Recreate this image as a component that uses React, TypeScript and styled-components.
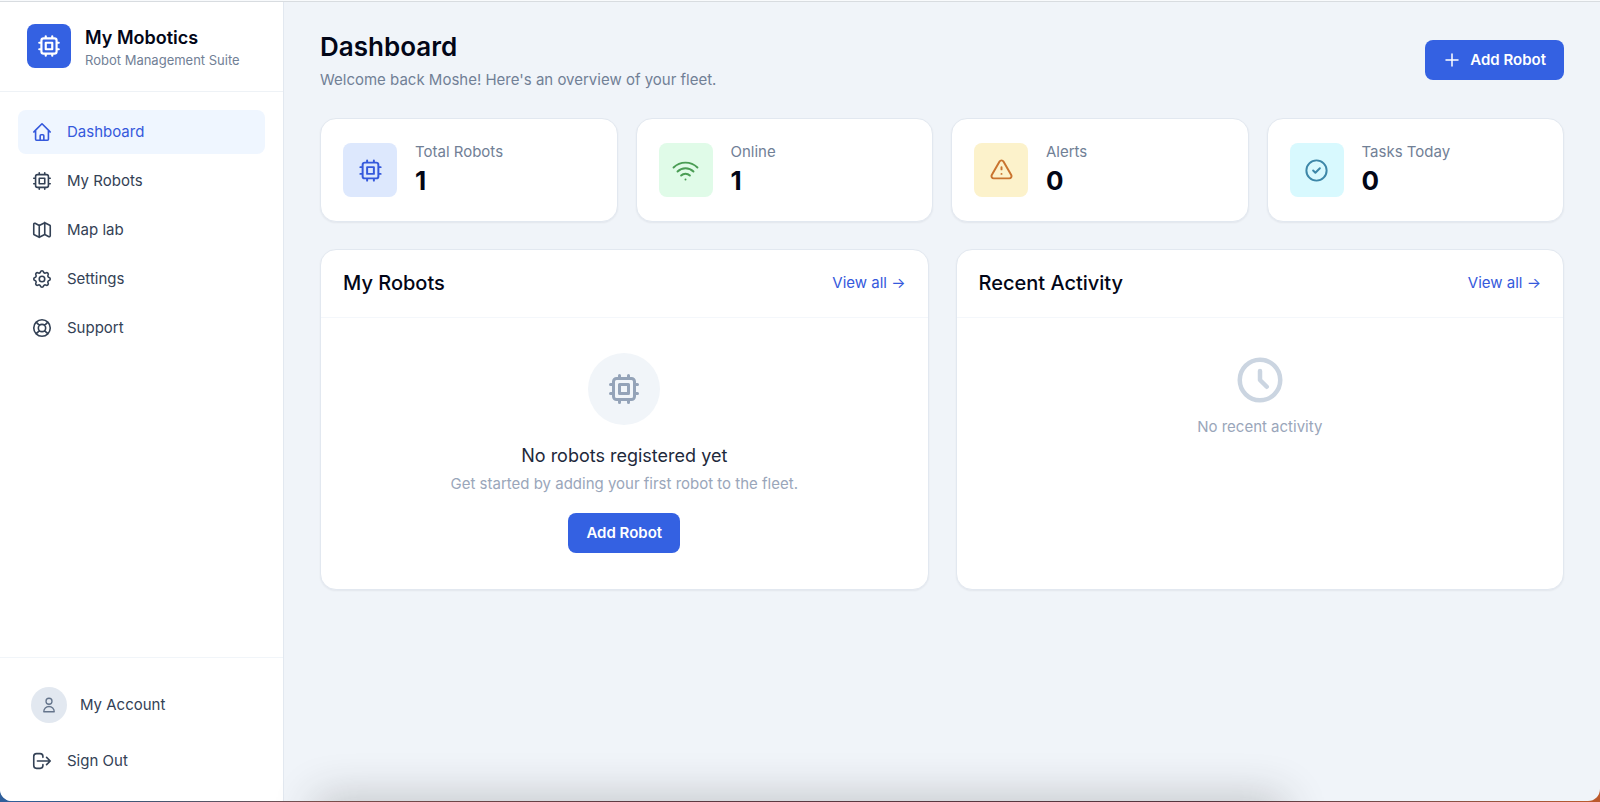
import React from "react";
import styled, { createGlobalStyle } from "styled-components";

const GlobalStyle = createGlobalStyle`
  * { box-sizing: border-box; }
  body {
    margin: 0;
    background: linear-gradient(to right, #2f5f9c 0, #3f5878 8%, #7a4f4c 20%, #5c3a42 40%, #54363f 75%, #7a4f4c 88%, #bd5a2c 100%);
    color: #020617;
    font-family: Inter, "Liberation Sans", sans-serif;
    font-size: 15px;
    line-height: 22px;
  }
  h1, h2, h3, p, ul, dl, dd { margin: 0; padding: 0; }
  a { color: inherit; text-decoration: none; }
`;

const Window = styled.div`
  position: relative;
  display: flex;
  flex-direction: column;
  min-height: calc(100vh - 1px);
  overflow: hidden;
  background: #f0f4f9;
  border-radius: 0 0 12px 12px;
`;

const TopEdge = styled.div`
  height: 2px;
  background: #f8fafc;
  border-bottom: 1px solid #d8dce0;
`;

const Shell = styled.div`
  display: flex;
  flex: 1;
`;

const Sidebar = styled.aside`
  display: flex;
  flex-direction: column;
  flex: none;
  width: 284px;
  background: #ffffff;
  border-right: 1px solid #e2e8f0;
`;

const Brand = styled.div`
  display: flex;
  align-items: center;
  gap: 14px;
  padding: 22px 27px 23px;
  border-bottom: 1px solid #eef2f6;
`;

const BrandMark = styled.div`
  display: grid;
  place-items: center;
  width: 44px;
  height: 44px;
  border-radius: 8px;
  background: #3461e2;
  color: #ffffff;
`;

const BrandName = styled.div`
  font-size: 18px;
  font-weight: 600;
  line-height: 28px;
`;

const BrandTagline = styled.div`
  color: #718096;
  font-size: 13px;
  line-height: 16px;
`;

const Nav = styled.nav`
  flex: 1;
  padding: 18px;
`;

const NavList = styled.ul`
  display: flex;
  flex-direction: column;
  gap: 5px;
  list-style: none;
`;

const NavLink = styled.a<{ $active?: boolean }>`
  display: flex;
  align-items: center;
  gap: 14px;
  height: 44px;
  padding: 0 13px;
  border-radius: 8px;
  background: ${(p) => (p.$active ? "#eff6ff" : "transparent")};
  color: ${(p) => (p.$active ? "#3559dc" : "#334155")};
`;

const SidebarFooter = styled.div`
  display: flex;
  flex-direction: column;
  gap: 5px;
  padding: 18px;
  border-top: 1px solid #f1f5f9;
`;

const AccountLink = styled.a`
  display: flex;
  align-items: center;
  gap: 13px;
  height: 58px;
  padding: 0 13px;
  color: #334155;
`;

const Avatar = styled.span`
  display: grid;
  place-items: center;
  width: 36px;
  height: 36px;
  border-radius: 50%;
  background: #e2e8f0;
  color: #64748b;
`;

const SignOutButton = styled.button`
  display: flex;
  align-items: center;
  gap: 14px;
  height: 44px;
  padding: 0 13px;
  border: 0;
  background: none;
  color: #334155;
  font: inherit;
  cursor: pointer;
`;

const Main = styled.main`
  display: flex;
  flex-direction: column;
  gap: 27px;
  flex: 1;
  min-width: 0;
  padding: 27px 36px;
`;

const PageHeader = styled.header`
  display: flex;
  align-items: center;
  justify-content: space-between;
`;

const PageTitle = styled.h1`
  font-size: 26px;
  font-weight: 600;
  line-height: 36px;
`;

const PageSubtitle = styled.p`
  margin-top: 4px;
  color: #718096;
`;

const PrimaryButton = styled.button`
  display: inline-flex;
  align-items: center;
  gap: 9px;
  height: 40px;
  padding: 0 18px;
  border: 0;
  border-radius: 8px;
  background: #3461e2;
  color: #ffffff;
  font: inherit;
  font-weight: 600;
  cursor: pointer;
`;

const StatGrid = styled.dl`
  display: grid;
  grid-template-columns: repeat(4, 1fr);
  gap: 18px;
`;

const Card = styled.section`
  background: #ffffff;
  border: 1px solid #e2e8f0;
  border-radius: 16px;
  box-shadow: 0 1px 2px rgba(15, 23, 42, 0.06);
`;

const StatCard = styled(Card).attrs({ as: "div" })`
  display: flex;
  align-items: center;
  gap: 18px;
  height: 104px;
  padding: 0 22px;
`;

const StatIcon = styled.span<{ $bg: string; $fg: string }>`
  display: grid;
  place-items: center;
  flex: none;
  width: 54px;
  height: 54px;
  border-radius: 8px;
  background: ${(p) => p.$bg};
  color: ${(p) => p.$fg};
`;

const StatLabel = styled.dt`
  color: #718096;
`;

const StatValue = styled.dd`
  font-size: 26px;
  font-weight: 700;
  line-height: 36px;
`;

const PanelGrid = styled.div`
  display: grid;
  grid-template-columns: repeat(2, 1fr);
  gap: 27px;
`;

const PanelHeader = styled.header`
  display: flex;
  align-items: center;
  justify-content: space-between;
  height: 68px;
  padding: 0 22px 2px;
  border-bottom: 1px solid #f4f7fb;
`;

const PanelTitle = styled.h2`
  font-size: 20px;
  font-weight: 500;
  line-height: 28px;
`;

const ViewAll = styled.a`
  color: #3559dc;
`;

const EmptyState = styled.div`
  display: flex;
  flex-direction: column;
  align-items: center;
  padding: 35px 22px 36px;
  color: #9aa6ba;
`;

const EmptyCircle = styled.div`
  display: grid;
  place-items: center;
  width: 72px;
  height: 72px;
  margin-bottom: 18px;
  border-radius: 50%;
  background: #f1f5f9;
  color: #94a3b8;
`;

const EmptyTitle = styled.h3`
  margin-bottom: 4px;
  color: #1e293b;
  font-size: 18px;
  font-weight: 400;
  line-height: 26px;
`;

const EmptyAction = styled.div`
  display: flex;
  margin-top: 18px;
`;

const EmptyClock = styled.div`
  display: flex;
  margin-bottom: 9px;
  color: #cbd5e1;
`;

const BottomShade = styled.div`
  position: absolute;
  top: 100%;
  left: 20%;
  right: 20%;
  height: 40px;
  box-shadow: 0 0 44px 4px rgba(40, 40, 40, 0.24);
  pointer-events: none;
`;

const paths = {
  chip: "M9 3v2m6-2v2M9 19v2m6-2v2M5 9H3m2 6H3m18-6h-2m2 6h-2M7 19h10a2 2 0 002-2V7a2 2 0 00-2-2H7a2 2 0 00-2 2v10a2 2 0 002 2zM9 9h6v6H9V9z",
  home: "M3 12l2-2m0 0l7-7 7 7M5 10v10a1 1 0 001 1h3m10-11l2 2m-2-2v10a1 1 0 01-1 1h-3m-6 0a1 1 0 001-1v-4a1 1 0 011-1h2a1 1 0 011 1v4a1 1 0 001 1m-6 0h6",
  map: "M9 20l-5.447-2.724A1 1 0 013 16.382V5.618a1 1 0 011.447-.894L9 7m0 13l6-3m-6 3V7m6 10l4.553 2.276A1 1 0 0021 18.382V7.618a1 1 0 00-.553-.894L15 4m0 13V4m0 0L9 7",
  cog: "M10.325 4.317c.426-1.756 2.924-1.756 3.35 0a1.724 1.724 0 002.573 1.066c1.543-.94 3.31.826 2.37 2.37a1.724 1.724 0 001.065 2.572c1.756.426 1.756 2.924 0 3.35a1.724 1.724 0 00-1.066 2.573c.94 1.543-.826 3.31-2.37 2.37a1.724 1.724 0 00-2.572 1.065c-.426 1.756-2.924 1.756-3.35 0a1.724 1.724 0 00-2.573-1.066c-1.543.94-3.31-.826-2.37-2.37a1.724 1.724 0 00-1.065-2.572c-1.756-.426-1.756-2.924 0-3.35a1.724 1.724 0 001.066-2.573c-.94-1.543.826-3.31 2.37-2.37.996.608 2.296.07 2.572-1.065zM15 12a3 3 0 11-6 0 3 3 0 016 0z",
  support: "M18.364 5.636l-3.536 3.536m0 5.656l3.536 3.536M9.172 9.172L5.636 5.636m3.536 9.192l-3.536 3.536M21 12a9 9 0 11-18 0 9 9 0 0118 0zm-5 0a4 4 0 11-8 0 4 4 0 018 0z",
  user: "M16 7a4 4 0 11-8 0 4 4 0 018 0zM12 14a7 7 0 00-7 7h14a7 7 0 00-7-7z",
  logout: "M17 16l4-4m0 0l-4-4m4 4H7m6 4v1a3 3 0 01-3 3H6a3 3 0 01-3-3V7a3 3 0 013-3h4a3 3 0 013 3v1",
  wifi: "M8.111 16.404a5.5 5.5 0 017.778 0M12 20h.01m-7.08-7.071c3.904-3.905 10.236-3.905 14.141 0M1.394 9.393c5.857-5.857 15.355-5.857 21.213 0",
  warning: "M12 9v2m0 4h.01m-6.938 4h13.856c1.54 0 2.502-1.667 1.732-3L13.732 4c-.77-1.333-2.694-1.333-3.464 0L3.34 16c-.77 1.333.192 3 1.732 3z",
  check: "M9 12l2 2 4-4m6 2a9 9 0 11-18 0 9 9 0 0118 0z",
  clock: "M12 8v4l3 3m6-3a9 9 0 11-18 0 9 9 0 0118 0z",
  plus: "M12 4v16m8-8H4",
};

type IconName = keyof typeof paths;

function Icon({ name, size = 22, stroke = 1.75 }: { name: IconName; size?: number; stroke?: number }) {
  return (
    <svg
      width={size}
      height={size}
      viewBox="0 0 24 24"
      fill="none"
      stroke="currentColor"
      strokeWidth={stroke}
      strokeLinecap="round"
      strokeLinejoin="round"
      aria-hidden="true"
    >
      <path d={paths[name]} />
    </svg>
  );
}

const navItems: { label: string; icon: IconName; active?: boolean }[] = [
  { label: "Dashboard", icon: "home", active: true },
  { label: "My Robots", icon: "chip" },
  { label: "Map lab", icon: "map" },
  { label: "Settings", icon: "cog" },
  { label: "Support", icon: "support" },
];

const stats: { label: string; value: number; icon: IconName; bg: string; fg: string }[] = [
  { label: "Total Robots", value: 1, icon: "chip", bg: "#dde8fd", fg: "#3559dc" },
  { label: "Online", value: 1, icon: "wifi", bg: "#e0fbe8", fg: "#4a9d54" },
  { label: "Alerts", value: 0, icon: "warning", bg: "#fcf2cb", fg: "#c9742f" },
  { label: "Tasks Today", value: 0, icon: "check", bg: "#d8f9fe", fg: "#3d87a8" },
];

export default function App() {
  return (
    <>
      <GlobalStyle />
      <Window>
        <TopEdge />
        <Shell>
          <Sidebar>
            <Brand>
              <BrandMark>
                <Icon name="chip" size={26} stroke={2} />
              </BrandMark>
              <div>
                <BrandName>My Mobotics</BrandName>
                <BrandTagline>Robot Management Suite</BrandTagline>
              </div>
            </Brand>
            <Nav aria-label="Main">
              <NavList>
                {navItems.map((item) => (
                  <li key={item.label}>
                    <NavLink href="#" $active={item.active} aria-current={item.active ? "page" : undefined}>
                      <Icon name={item.icon} />
                      {item.label}
                    </NavLink>
                  </li>
                ))}
              </NavList>
            </Nav>
            <SidebarFooter>
              <AccountLink href="#">
                <Avatar>
                  <Icon name="user" size={18} />
                </Avatar>
                My Account
              </AccountLink>
              <SignOutButton type="button">
                <Icon name="logout" />
                Sign Out
              </SignOutButton>
            </SidebarFooter>
          </Sidebar>
          <Main>
            <PageHeader>
              <div>
                <PageTitle>Dashboard</PageTitle>
                <PageSubtitle>Welcome back Moshe! Here's an overview of your fleet.</PageSubtitle>
              </div>
              <PrimaryButton type="button">
                <Icon name="plus" size={18} stroke={2} />
                Add Robot
              </PrimaryButton>
            </PageHeader>
            <StatGrid>
              {stats.map((stat) => (
                <StatCard key={stat.label}>
                  <StatIcon $bg={stat.bg} $fg={stat.fg}>
                    <Icon name={stat.icon} size={27} />
                  </StatIcon>
                  <div>
                    <StatLabel>{stat.label}</StatLabel>
                    <StatValue>{stat.value}</StatValue>
                  </div>
                </StatCard>
              ))}
            </StatGrid>
            <PanelGrid>
              <Card>
                <PanelHeader>
                  <PanelTitle>My Robots</PanelTitle>
                  <ViewAll href="#">View all →</ViewAll>
                </PanelHeader>
                <EmptyState>
                  <EmptyCircle>
                    <Icon name="chip" size={36} stroke={2} />
                  </EmptyCircle>
                  <EmptyTitle>No robots registered yet</EmptyTitle>
                  <p>Get started by adding your first robot to the fleet.</p>
                  <EmptyAction>
                    <PrimaryButton type="button">Add Robot</PrimaryButton>
                  </EmptyAction>
                </EmptyState>
              </Card>
              <Card>
                <PanelHeader>
                  <PanelTitle>Recent Activity</PanelTitle>
                  <ViewAll href="#">View all →</ViewAll>
                </PanelHeader>
                <EmptyState>
                  <EmptyClock>
                    <Icon name="clock" size={54} stroke={2} />
                  </EmptyClock>
                  <p>No recent activity</p>
                </EmptyState>
              </Card>
            </PanelGrid>
          </Main>
        </Shell>
        <BottomShade />
      </Window>
    </>
  );
}
